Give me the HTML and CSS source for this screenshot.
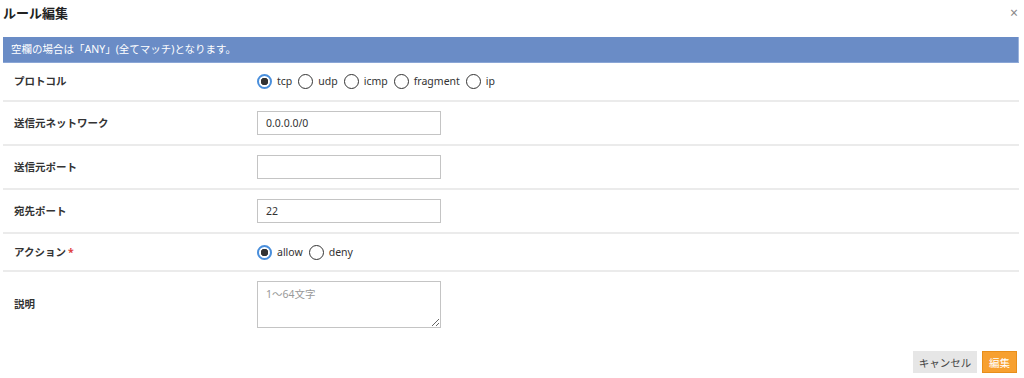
FILE: index.html
```html
<!DOCTYPE html>
<html lang="ja">
<head>
    <meta charset="UTF-8">
    <title>ルール編集</title>
    <link rel="stylesheet" href="styles.css">
</head>
<body>
    <div class="dialog">
        <div class="dialog-header">
            <h1 class="dialog-title">ルール編集</h1>
            <span class="close">&times;</span>
        </div>

        <div class="notice">空欄の場合は「ANY」(全てマッチ)となります。</div>

        <div class="form">
            <div class="row row-radio">
                <div class="label">プロトコル</div>
                <div class="field">
                    <label class="radio"><input type="radio" name="proto" checked> tcp</label>
                    <label class="radio"><input type="radio" name="proto"> udp</label>
                    <label class="radio"><input type="radio" name="proto"> icmp</label>
                    <label class="radio"><input type="radio" name="proto"> fragment</label>
                    <label class="radio"><input type="radio" name="proto"> ip</label>
                </div>
            </div>
            <div class="row">
                <div class="label">送信元ネットワーク</div>
                <div class="field"><input class="text" type="text" value="0.0.0.0/0"></div>
            </div>
            <div class="row">
                <div class="label">送信元ポート</div>
                <div class="field"><input class="text" type="text" value=""></div>
            </div>
            <div class="row">
                <div class="label">宛先ポート</div>
                <div class="field"><input class="text" type="text" value="22"></div>
            </div>
            <div class="row row-radio row-action">
                <div class="label">アクション<span class="req">*</span></div>
                <div class="field">
                    <label class="radio"><input type="radio" name="action" checked> allow</label>
                    <label class="radio"><input type="radio" name="action"> deny</label>
                </div>
            </div>
            <div class="row row-last">
                <div class="label">説明</div>
                <div class="field"><textarea class="text area" placeholder="1～64文字"></textarea></div>
            </div>
        </div>

        <div class="footer">
            <button class="btn btn-cancel">キャンセル</button>
            <button class="btn btn-primary">編集</button>
        </div>
    </div>
</body>
</html>
```

FILE: styles.css
```css
body, html {
    margin: 0;
    background-color: white;
    font-family: 'Noto Sans', 'Noto Sans CJK JP', sans-serif;
    font-size: 10.5px;
    line-height: 15px;
    color: #333;
}

.dialog {
    padding: 0 5px 0 3px;
}

.dialog-header {
    display: flex;
    justify-content: space-between;
    align-items: center;
    height: 37px;
}

.dialog-title {
    margin: 0;
    font-size: 13px;
    font-weight: 700;
    color: #222;
    position: relative;
    top: -5px;
}

.close {
    color: #888;
    font-size: 14px;
    margin-right: 1px;
    position: relative;
    top: -6px;
}

.notice {
    background-color: #6a8cc6;
    border-bottom: 1px solid #8aa6d6;
    border-right: 1px solid #9bb3dc;
    color: white;
    height: 25px;
    line-height: 24px;
    padding-left: 8px;
}

.row {
    display: flex;
    align-items: center;
    box-sizing: border-box;
    height: 44px;
    border-bottom: 2px solid #ebebeb;
}

.row-radio {
    height: 39px;
}

.row-action {
    height: 38px;
}

.row-last {
    border-bottom: none;
    height: 64px;
}

.label {
    width: 243px;
    padding-left: 11px;
    font-weight: 700;
    color: #333;
}

.req {
    color: #e04040;
    margin-left: 2px;
}

.field {
    display: flex;
    align-items: center;
}

.radio {
    display: flex;
    align-items: center;
    margin-right: 6px;
    color: #333;
}

.radio input {
    appearance: none;
    width: 15px;
    height: 15px;
    margin: 0 5px 0 0;
    border: 1.5px solid #333;
    border-radius: 50%;
    box-sizing: border-box;
    background: white;
}

.radio input:checked {
    border: 2px solid #4a8fdc;
    background: radial-gradient(circle, #333 0 3.5px, white 4px);
}

.text {
    width: 184px;
    height: 24px;
    box-sizing: border-box;
    border: 1px solid #c4c4c4;
    padding: 0 8px;
    font-family: inherit;
    font-size: 10.5px;
    color: #333;
}

.area {
    height: 47px;
    padding: 4px 8px;
    resize: both;
}

.area::placeholder {
    color: #999;
}

.footer {
    display: flex;
    justify-content: flex-end;
    gap: 5px;
    padding-top: 15px;
    padding-right: 2px;
}

.btn {
    height: 22px;
    border: 1px solid transparent;
    font-family: inherit;
    font-size: 10.5px;
    padding: 0;
    white-space: nowrap;
}

.btn-cancel {
    background-color: #e6e6e6;
    color: #444;
    width: 64px;
}

.btn-primary {
    background-color: #f7a030;
    border-color: #e88e1a;
    color: white;
    width: 35px;
}
```
